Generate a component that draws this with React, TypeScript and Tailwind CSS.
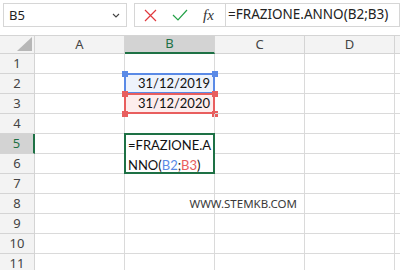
import React from "react";

const ui = { fontFamily: '"Noto Sans", "Open Sans", sans-serif' };
const cellFont = { fontFamily: 'Lato, "Liberation Sans", sans-serif' };

function TopBar() {
  return (
    <div className="h-[35px] bg-white flex items-start pt-[3px]" style={ui}>
      <div className="ml-[3px] w-[124px] h-[24px] border border-[#d6d6d6] bg-white flex items-center justify-between pl-[5px] pr-[6px]">
        <span className="text-[13px] text-[#222] leading-none">B5</span>
        <svg width="8" height="5" viewBox="0 0 8 5">
          <path d="M1 1 L4 4 L7 1" fill="none" stroke="#444" strokeWidth="1.1" />
        </svg>
      </div>
      <div className="ml-[7px] w-[92px] h-[24px] border border-[#d6d6d6] bg-white flex items-center">
        <svg className="ml-[9px]" width="13" height="13" viewBox="0 0 13 13">
          <path d="M1 1 L12 12 M12 1 L1 12" stroke="#e0393e" strokeWidth="1.2" fill="none" />
        </svg>
        <svg className="ml-[15px]" width="16" height="12" viewBox="0 0 16 12">
          <path d="M1 6 L6 11 L15 1" stroke="#24a148" strokeWidth="1.2" fill="none" />
        </svg>
        <span
          className="ml-[15px] text-[15px] italic text-[#333] leading-none"
          style={{ fontFamily: '"Liberation Serif", serif' }}
        >
          fx
        </span>
      </div>
      <div className="flex-1 h-[24px] border-y border-r border-[#d6d6d6] bg-white flex items-center pl-[2px]">
        <span className="text-[13.5px] text-[#222] leading-none whitespace-nowrap">=FRAZIONE.ANNO(B2;B3)</span>
      </div>
    </div>
  );
}

function Handle({ pos, color }: { pos: string; color: string }) {
  return <div className={`absolute w-[6px] h-[6px] ${pos}`} style={{ backgroundColor: color }} />;
}

export default function App() {
  const rows = [1, 2, 3, 4, 5, 6, 7, 8, 9, 10, 11];
  const colLetters = ["A", "B", "C", "D"];
  const grid = "#dadada";
  return (
    <div className="w-[400px] h-[270px] overflow-hidden bg-white">
      <TopBar />
      <div className="grid grid-cols-[35px_90px_90px_90px_90px_1fr]" style={ui}>
        <div className="relative h-[19px] bg-[#f3f3f3] border-t border-r border-b border-[#d4d4d4]">
          <svg className="absolute right-[2px] bottom-[2px]" width="15" height="14" viewBox="0 0 15 14">
            <polygon points="15,0 15,14 0,14" fill="#b7b7b7" />
          </svg>
        </div>
        {colLetters.map((c) =>
          c === "B" ? (
            <div
              key={c}
              className="h-[19px] bg-[#d3d3d3] border-t border-r border-[#d4d4d4] border-b-2 border-b-[#1e7145] flex items-center justify-center text-[13px] text-[#1e7145]"
            >
              B
            </div>
          ) : (
            <div
              key={c}
              className="h-[19px] bg-[#f3f3f3] border-t border-r border-b border-[#d4d4d4] flex items-center justify-center text-[13px] text-[#444]"
            >
              {c}
            </div>
          )
        )}
        <div className="h-[19px] bg-[#f3f3f3] border-t border-b border-[#d4d4d4]" />

        {rows.map((r) => (
          <React.Fragment key={r}>
            {r === 5 ? (
              <div className="h-[20px] bg-[#d3d3d3] border-b border-[#d4d4d4] border-r-2 border-r-[#1e7145] flex items-center justify-center text-[13px] text-[#1e7145]">
                5
              </div>
            ) : (
              <div className="h-[20px] bg-[#f3f3f3] border-b border-r border-[#d4d4d4] flex items-center justify-center text-[13px] text-[#444]">
                {r}
              </div>
            )}
            <div className="h-[20px] border-b border-r" style={{ borderColor: grid }} />
            <div className="relative h-[20px] border-b border-r" style={{ borderColor: grid }}>
              {r === 2 && (
                <>
                  <div className="absolute left-[-1px] top-[-1px] w-[91px] h-[21px] border-2 border-[#5a8ae6] bg-[#eef3fc]" />
                  <Handle pos="left-[-3px] top-[-3px]" color="#5a8ae6" />
                  <Handle pos="right-[-4px] top-[-3px]" color="#5a8ae6" />
                  <div
                    className="absolute inset-0 flex items-center justify-end pr-[4px] text-[13px] text-[#111] leading-none"
                    style={cellFont}
                  >
                    31/12/2019
                  </div>
                </>
              )}
              {r === 3 && (
                <>
                  <div className="absolute left-[-1px] top-[-1px] w-[91px] h-[21px] border-2 border-[#e85e5e] bg-[#fdeded]" />
                  <Handle pos="left-[-3px] top-[-3px]" color="#e85e5e" />
                  <Handle pos="right-[-4px] top-[-3px]" color="#e85e5e" />
                  <Handle pos="left-[-3px] bottom-[-4px]" color="#e85e5e" />
                  <Handle pos="right-[-4px] bottom-[-4px]" color="#e85e5e" />
                  <div
                    className="absolute inset-0 flex items-center justify-end pr-[4px] text-[13px] text-[#111] leading-none"
                    style={cellFont}
                  >
                    31/12/2020
                  </div>
                </>
              )}
              {r === 5 && (
                <div
                  className="absolute left-[-1px] top-[-1px] w-[91px] h-[41px] z-10 border-2 border-[#1e7145] bg-white pl-[2px] text-[13px] text-[#111] leading-[20px]"
                  style={cellFont}
                >
                  <div>=FRAZIONE.A</div>
                  <div>
                    NNO(<span className="text-[#5a8ae6]">B2</span>;<span className="text-[#e85e5e]">B3</span>)
                  </div>
                </div>
              )}
            </div>
            <div className="relative h-[20px] border-b border-r" style={{ borderColor: grid }}>
              {r === 8 && (
                <div className="absolute inset-0 flex items-center justify-end pr-[7px]">
                  <span className="whitespace-nowrap text-[11.5px] text-[#3a3a3a] leading-none" style={ui}>
                    WWW.STEMKB.COM
                  </span>
                </div>
              )}
            </div>
            <div className="h-[20px] border-b border-r" style={{ borderColor: grid }} />
            <div className="h-[20px] border-b" style={{ borderColor: grid }} />
          </React.Fragment>
        ))}
      </div>
    </div>
  );
}
